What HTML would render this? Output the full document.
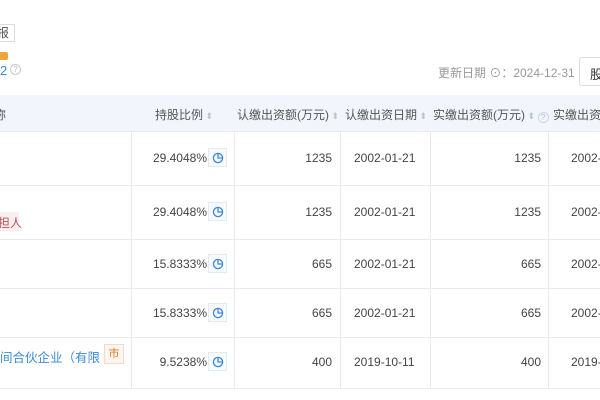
<!DOCTYPE html>
<html><head><meta charset="utf-8"><style>
*{margin:0;padding:0;box-sizing:border-box}
body{width:600px;height:400px;overflow:hidden;background:#fff;font-family:"Liberation Sans","Noto Sans CJK SC",sans-serif;font-size:12px;color:#444;position:relative}
.a{position:absolute;white-space:nowrap}
.hl{position:absolute;left:0;width:600px;height:1px;background:#e8ecf2}
.vl{position:absolute;width:1px;background:#e8ecf2;top:131px;height:257px}
.r{text-align:right}
.pie{position:absolute;width:19px;height:19px;border:1px solid #e3eaf3;background:#f8fafd}
.pie svg{position:absolute;left:3px;top:3px}
.s{color:#c0c4cc;font-size:9px}
</style></head><body>
<div class="a" style="left:-4px;top:24px;width:19px;height:18px;border:1px solid #ddd;border-left:none;font-size:12px;line-height:16px;color:#555;padding-left:1px">报</div>
<div class="a" style="left:0;top:52px;width:8px;height:8px;background:#f0a73a;border-radius:0 2px 2px 0"></div>
<div class="a" style="left:0;top:63px;color:#3d8ad8;font-size:13px">2</div>
<div class="a" style="left:10px;top:64px;width:11px;height:11px;border:1px solid #c4c8cf;border-radius:50%;font-size:8px;color:#bbb;text-align:center;line-height:9px">?</div>
<div class="a" style="left:438px;top:64px;color:#999;font-size:12px">更新日期 ⊙：2024-12-31</div>
<div class="a" style="left:579px;top:57px;width:40px;height:29px;border:1px solid #ddd;border-radius:3px;padding:6px 0 0 10px;font-size:13px;color:#333">股</div>
<div class="a" style="left:0;top:95px;width:600px;height:36px;background:#f2f6fc"></div>
<div class="a" style="left:-6px;top:106px;color:#555">称</div>
<div class="a" style="left:155px;top:106px;color:#555">持股比例<span class="s"> ⬍</span></div>
<div class="a" style="left:237px;top:106px;color:#555">认缴出资额(万元)<span class="s"> ⬍</span></div>
<div class="a" style="left:345px;top:106px;color:#555">认缴出资日期<span class="s"> ⬍</span></div>
<div class="a" style="left:433px;top:106px;color:#555">实缴出资额(万元)<span class="s"> ⬍ </span><span style="display:inline-block;width:11px;height:11px;border:1px solid #c9d6e6;border-radius:50%;font-size:8px;color:#bbc;text-align:center;line-height:9px;vertical-align:-1px">?</span></div>
<div class="a" style="left:553px;top:106px;color:#555">实缴出资</div>
<div class="hl" style="top:131px"></div><div class="hl" style="top:185px"></div><div class="hl" style="top:239px"></div><div class="hl" style="top:288px"></div><div class="hl" style="top:337px"></div><div class="hl" style="top:388px"></div>
<div class="vl" style="left:131px"></div><div class="vl" style="left:234px"></div><div class="vl" style="left:340px"></div><div class="vl" style="left:430px"></div><div class="vl" style="left:548px"></div>
<div class="a" style="left:-8px;top:212px;width:27px;height:19px;background:#fbeeee;color:#b55;padding:2px 0 0 6px">担人</div>
<div class="a" style="left:0;top:347px;color:#3d8ad8;font-size:12.5px">间合伙企业（有限</div>
<div class="a" style="left:104px;top:344px;width:20px;height:20px;border:1px solid #f3dcc7;background:#fdf6ef;color:#e27a2e;font-size:11px;text-align:center;line-height:18px">巿</div>
<div id="rows"></div>
<script>
var R=[[158,"29.4048%","1235","2002-01-21","1235","2002-"],[212,"29.4048%","1235","2002-01-21","1235","2002-"],[264,"15.8333%","665","2002-01-21","665","2002-"],[313,"15.8333%","665","2002-01-21","665","2002-"],[362,"9.5238%","400","2019-10-11","400","2019-"]];
var h="";
R.forEach(function(r){var y=r[0]-7;
h+='<div class="a r" style="left:100px;width:107px;top:'+y+'px">'+r[1]+'</div>';
h+='<div class="pie" style="left:208px;top:'+(y-3)+'px"><svg width="12" height="12" viewBox="0 0 12 12"><circle cx="6" cy="6" r="4.6" fill="none" stroke="#3d8ad8" stroke-width="1.3"/><path d="M6 1.4V6H10.6" fill="none" stroke="#3d8ad8" stroke-width="1.3"/></svg></div>';
h+='<div class="a r" style="left:240px;width:92px;top:'+y+'px">'+r[2]+'</div>';
h+='<div class="a" style="left:354px;top:'+y+'px">'+r[3]+'</div>';
h+='<div class="a r" style="left:440px;width:101px;top:'+y+'px">'+r[4]+'</div>';
h+='<div class="a" style="left:571px;top:'+y+'px">'+r[5]+'</div>';});
document.getElementById("rows").innerHTML=h;
</script>
</body></html>
